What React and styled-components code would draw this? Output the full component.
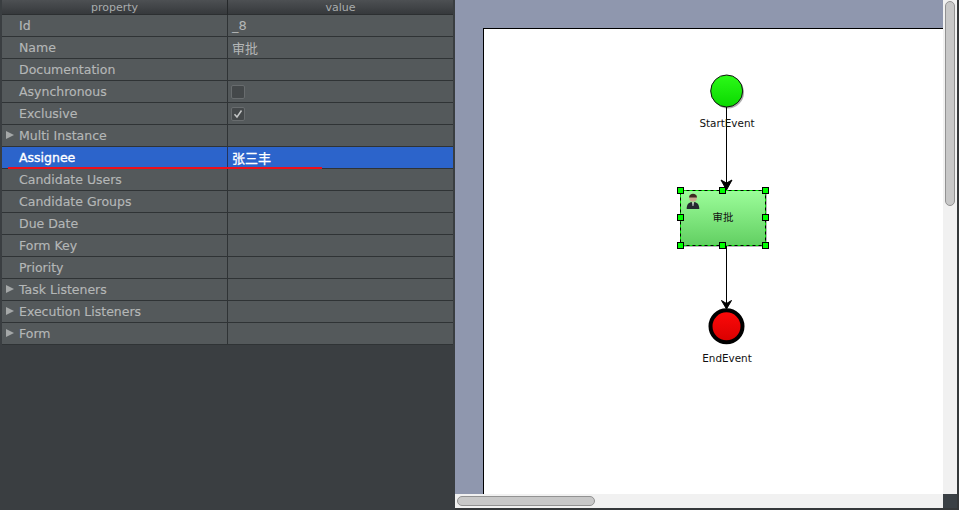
import React from "react";
import styled, { createGlobalStyle } from "styled-components";

const GlobalStyle = createGlobalStyle`
  html, body {
    margin: 0;
    padding: 0;
    background: #3a3e41;
    overflow: hidden;
  }
`;

const Window = styled.div`
  display: grid;
  grid-template-columns: 455px 1fr;
  width: 959px;
  height: 510px;
  overflow: hidden;
  background: #35383a;
  font-family: "DejaVu Sans", "Noto Sans CJK SC", sans-serif;
`;

const Panel = styled.div`
  position: relative;
  padding: 0 2px;
  background: #3a3e41;
`;

const HeaderRow = styled.div`
  display: grid;
  grid-template-columns: 226px 1fr;
  height: 14px;
  background: linear-gradient(#4d5053, #36393c);
  border-bottom: 1px solid #2c2f31;
`;

const HeaderCell = styled.div`
  font-size: 11px;
  line-height: 16px;
  text-align: center;
  color: #a9acad;
  border-right: ${(p) => (p.$last ? "none" : "1px solid #25282a")};
`;

const Row = styled.div`
  display: grid;
  grid-template-columns: 226px 1fr;
  height: 21px;
  background: ${(p) => (p.$selected ? "#2c64cb" : "#54595b")};
  border-bottom: 1px solid #2f3335;
`;

const NameCell = styled.div`
  position: relative;
  padding-left: 17px;
  font-size: 12.5px;
  line-height: 21px;
  color: ${(p) => (p.$selected ? "#ffffff" : "#b4b7b7")};
  -webkit-text-stroke: ${(p) => (p.$selected ? "0.35px #ffffff" : "0.15px #b4b7b7")};
  border-right: 1px solid ${(p) => (p.$selected ? "#24345c" : "#2f3335")};
`;

const ValueCell = styled.div`
  display: flex;
  align-items: center;
  padding-left: 4px;
  font-size: 13px;
  color: ${(p) => (p.$selected ? "#ffffff" : "#b4b7b7")};
  -webkit-text-stroke: ${(p) => (p.$selected ? "0.3px #ffffff" : "0")};
`;

const Arrow = styled.span`
  position: absolute;
  left: 4px;
  top: 6px;
  width: 0;
  height: 0;
  border-top: 4.5px solid transparent;
  border-bottom: 4.5px solid transparent;
  border-left: 8px solid #a5a8a8;
`;

const CheckBox = styled.span`
  display: flex;
  align-items: center;
  justify-content: center;
  box-sizing: border-box;
  width: 14px;
  height: 14px;
  margin-left: -1px;
  border: 1px solid #686c6e;
  border-radius: 2px;
  background: #44484a;
`;

const RedLine = styled.div`
  position: absolute;
  left: 8px;
  top: 167px;
  width: 314px;
  height: 2px;
  background: #ee0f1a;
`;

const Canvas = styled.div`
  display: grid;
  grid-template-columns: 1fr 14px;
  grid-template-rows: 1fr 14px;
  height: 508px;
  margin-right: 2px;
  background: #f1f1f1;
`;

const Viewport = styled.div`
  padding: 28px 0 0 28px;
  background: #8f97ae;
  overflow: hidden;
`;

const Sheet = styled.div`
  position: relative;
  height: 100%;
  background: #ffffff;
  border-top: 1px solid #000000;
  border-left: 1px solid #000000;
  box-sizing: border-box;
`;

const Diagram = styled.svg`
  position: absolute;
  left: 0;
  top: 0;
`;

const NodeLabel = styled.div`
  position: absolute;
  left: ${(p) => p.$x}px;
  top: ${(p) => p.$y}px;
  width: 100px;
  transform: translateX(-50%);
  text-align: center;
  font-size: 10.4px;
  line-height: 14px;
  color: #111111;
`;

const VScrollTrack = styled.div`
  padding: 1px 0 0 2px;
  background: #f1f1f1;
`;

const VThumb = styled.div`
  box-sizing: border-box;
  width: 10px;
  height: 205px;
  background: #c8c8c8;
  border: 1px solid #929292;
  border-radius: 5px;
`;

const HScrollTrack = styled.div`
  padding: 2px 0 0 2px;
  background: #f1f1f1;
`;

const HThumb = styled.div`
  box-sizing: border-box;
  width: 138px;
  height: 10px;
  background: #c8c8c8;
  border: 1px solid #929292;
  border-radius: 5px;
`;

const Corner = styled.div`
  background: #3a4045;
`;

const rows = [
  { name: "Id", value: "_8" },
  { name: "Name", value: "审批" },
  { name: "Documentation" },
  { name: "Asynchronous", check: "off" },
  { name: "Exclusive", check: "on" },
  { name: "Multi Instance", arrow: true },
  { name: "Assignee", value: "张三丰", selected: true },
  { name: "Candidate Users" },
  { name: "Candidate Groups" },
  { name: "Due Date" },
  { name: "Form Key" },
  { name: "Priority" },
  { name: "Task Listeners", arrow: true },
  { name: "Execution Listeners", arrow: true },
  { name: "Form", arrow: true },
];

// handle centres around the selected task, sheet coordinates
const handles = [
  [196.5, 161.5], [238.5, 161.5], [281.5, 161.5],
  [196.5, 188.5], [281.5, 188.5],
  [196.5, 216.5], [238.5, 216.5], [281.5, 216.5],
];

const TickIcon = () => (
  <svg width="10" height="10" viewBox="0 0 10 10">
    <path d="M1.5 5.2 L4 8 L8.5 1.5" fill="none" stroke="#c4c6c6" strokeWidth="1.5" />
  </svg>
);

const FlowDiagram = () => (
  <Diagram width="460" height="466" viewBox="0 0 460 466">
    <defs>
      <linearGradient id="startFill" x1="0" y1="0" x2="0" y2="1">
        <stop offset="0" stopColor="#2cfa18" />
        <stop offset="1" stopColor="#0ad800" />
      </linearGradient>
      <linearGradient id="endFill" x1="0" y1="0" x2="0" y2="1">
        <stop offset="0" stopColor="#ff0a0a" />
        <stop offset="1" stopColor="#d80000" />
      </linearGradient>
      <linearGradient id="taskFill" x1="0" y1="0" x2="0" y2="1">
        <stop offset="0" stopColor="#9cfd9a" />
        <stop offset="1" stopColor="#62cf62" />
      </linearGradient>
    </defs>

    <circle cx="244" cy="63.5" r="16" fill="#8a8a8a" opacity="0.7" />
    <circle cx="242.7" cy="62" r="16" fill="url(#startFill)" stroke="#111" strokeWidth="1" />
    <path d="M242.5 78 V155" stroke="#000" strokeWidth="1" />
    <path d="M237 151 L242.5 154 L248 151 L242.5 161 Z" fill="#000" stroke="#000" strokeWidth="1" />

    <rect x="198" y="163" width="85" height="55" fill="#9a9a9a" opacity="0.7" />
    <rect x="196.5" y="161.5" width="85" height="55" fill="url(#taskFill)" />
    <rect x="196.5" y="161.5" width="85" height="55" fill="none" stroke="#00e000" strokeWidth="1" />
    <rect x="196.5" y="161.5" width="85" height="55" fill="none" stroke="#000" strokeWidth="1" strokeDasharray="3 3" />

    <g>
      <circle cx="209" cy="169" r="3.8" fill="#c9a98f" />
      <path d="M205 168.5 C205 163.5 213 163.5 213 168.5 Z" fill="#3d2c22" />
      <path d="M202.7 180 C202.7 175 205 173.6 207.5 173 L209 174.5 L210.5 173 C213 173.6 215.3 175 215.3 180 Z" fill="#252a30" />
      <path d="M208.2 173.5 H209.8 L209.4 177 H208.6 Z" fill="#e6e6e6" />
    </g>

    <path d="M242.5 217 V275" stroke="#000" strokeWidth="1" />
    <path d="M237.5 271.5 L242.5 274.5 L247.5 271.5 L242.5 280 Z" fill="#000" stroke="#000" strokeWidth="1" />

    <circle cx="242.5" cy="297.3" r="16" fill="url(#endFill)" stroke="#000" strokeWidth="4" />

    {handles.map(([x, y]) => (
      <rect key={`${x}-${y}`} x={x - 3} y={y - 3} width="6" height="6" fill="#00ff00" stroke="#000" strokeWidth="1" />
    ))}
  </Diagram>
);

const App = () => {
  return (
    <>
      <GlobalStyle />
      <Window>
        <Panel>
          <HeaderRow>
            <HeaderCell>property</HeaderCell>
            <HeaderCell $last>value</HeaderCell>
          </HeaderRow>
          {rows.map((row) => (
            <Row key={row.name} $selected={row.selected}>
              <NameCell $selected={row.selected}>
                {row.arrow && <Arrow />}
                {row.name}
              </NameCell>
              <ValueCell $selected={row.selected}>
                {row.value}
                {row.check && <CheckBox>{row.check === "on" && <TickIcon />}</CheckBox>}
              </ValueCell>
            </Row>
          ))}
          <RedLine />
        </Panel>
        <Canvas>
          <Viewport>
            <Sheet>
              <FlowDiagram />
              <NodeLabel $x={243} $y={87}>StartEvent</NodeLabel>
              <NodeLabel $x={239} $y={181}>审批</NodeLabel>
              <NodeLabel $x={243} $y={322}>EndEvent</NodeLabel>
            </Sheet>
          </Viewport>
          <VScrollTrack>
            <VThumb />
          </VScrollTrack>
          <HScrollTrack>
            <HThumb />
          </HScrollTrack>
          <Corner />
        </Canvas>
      </Window>
    </>
  );
};

export default App;
